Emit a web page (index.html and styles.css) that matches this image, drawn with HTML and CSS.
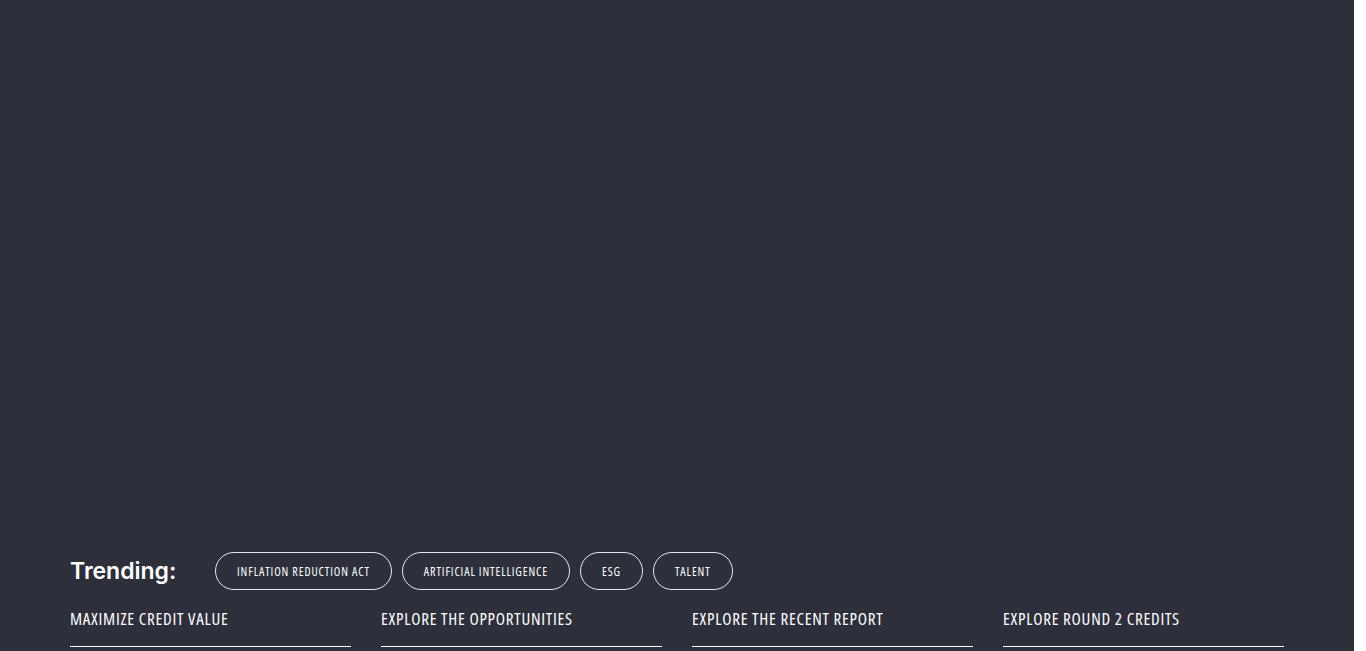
FILE: index.html
```html
<!DOCTYPE html>
<html>
<head>
<meta name="viewport" content="width=device-width, initial-scale=1">
<title>Trending</title>
<link rel="stylesheet" href="styles.css">
</head>
<body>
<div class="page">
   <!-- empty hero area -->
   <div class="hero"></div>

   <div class="content">
      <div class="trending">
         <span class="trending-label">Trending:</span>
         <div class="pills">
            <a class="pill" href="#">Inflation Reduction Act</a>
            <a class="pill" href="#">Artificial Intelligence</a>
            <a class="pill" href="#">ESG</a>
            <a class="pill" href="#">Talent</a>
         </div>
      </div>

      <div class="links">
         <a class="link" href="#">Maximize credit value</a>
         <a class="link" href="#">Explore the opportunities</a>
         <a class="link" href="#">Explore the recent report</a>
         <a class="link" href="#">Explore round 2 credits</a>
      </div>
   </div>
</div>
</body>
</html>
```

FILE: styles.css
```css
html,
body {
   margin: 0;
   padding: 0;
   height: 100%;
   overflow: hidden;
   background: #ffffff;
}

.page {
   width: calc(100% - 12px);
   height: 100%;
   background: #2d303b;
   color: #ffffff;
}

.hero {
   height: 552px;
}

.content {
   padding: 0 70px;
}

.trending {
   display: flex;
   align-items: center;
   height: 38px;
}

.trending-label {
   font-family: "Inter", "Liberation Sans", sans-serif;
   font-weight: 600;
   font-size: 23px;
   width: 145px;
}

.pills {
   display: flex;
   gap: 10px;
}

.pill {
   display: flex;
   align-items: center;
   height: 36px;
   padding: 0 21px;
   border: 1px solid #e8e8ea;
   border-radius: 19px;
   color: #ffffff;
   text-decoration: none;
   text-transform: uppercase;
   font-family: "Open Sans", sans-serif;
   font-stretch: 75%;
   font-weight: 400;
   font-size: 12px;
   letter-spacing: 0.9px;
}

.links {
   display: grid;
   grid-template-columns: repeat(4, 1fr);
   gap: 30px;
   margin-top: 19px;
}

.link {
   display: block;
   padding-bottom: 17px;
   border-bottom: 1px solid #ffffff;
   color: #ffffff;
   text-decoration: none;
   text-transform: uppercase;
   font-family: "Open Sans", sans-serif;
   font-stretch: 75%;
   font-weight: 400;
   font-size: 17px;
   line-height: 20px;
   letter-spacing: 0.75px;
}
```
